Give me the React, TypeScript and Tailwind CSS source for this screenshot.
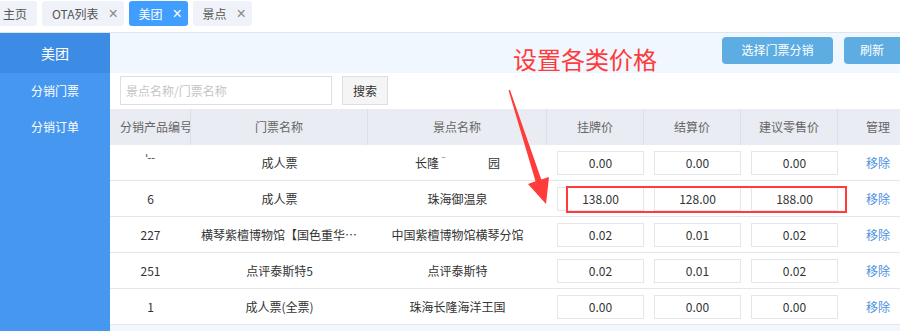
import React from "react";

type Row = {
  id: React.ReactNode;
  ticket: string;
  spot: React.ReactNode;
  prices: [string, string, string];
};

const rows: Row[] = [
  {
    id: <span className="text-[11px] leading-none -mt-[10px]">ˈ--</span>,
    ticket: "成人票",
    spot: (
      <span>
        长隆<span className="text-[9px] align-top">ˉ</span>
        <span className="inline-block w-[40px]" />园
      </span>
    ),
    prices: ["0.00", "0.00", "0.00"],
  },
  { id: "6", ticket: "成人票", spot: "珠海御温泉", prices: ["138.00", "128.00", "188.00"] },
  { id: "227", ticket: "横琴紫檀博物馆【国色重华展】门票", spot: "中国紫檀博物馆横琴分馆", prices: ["0.02", "0.01", "0.02"] },
  { id: "251", ticket: "点评泰斯特5", spot: "点评泰斯特", prices: ["0.02", "0.01", "0.02"] },
  { id: "1", ticket: "成人票(全票)", spot: "珠海长隆海洋王国", prices: ["0.00", "0.00", "0.00"] },
];

const cols = "grid grid-cols-[81px_177px_179px_97px_97px_97px_80px]";

function Tab({ label, active, close = true, first }: { label: string; active?: boolean; close?: boolean; first?: boolean }) {
  return (
    <div
      className={`h-[25px] mt-[1px] rounded-[3px] flex items-center gap-[10px] text-[12px] ${
        first ? "-ml-[10px] pl-[13px] pr-[10px]" : "pl-[10px] pr-[6px]"
      } ${active ? "bg-[#409eff] text-white" : "bg-[#eff2f8] text-[#555]"}`}
    >
      <span>{label}</span>
      {close && (
        <span
          className={`w-[9px] text-center text-[16px] leading-none ${active ? "text-white" : "text-[#888]"}`}
          style={{ fontFamily: '"Liberation Sans", sans-serif' }}
        >
          ×
        </span>
      )}
    </div>
  );
}

function PriceInput({ value }: { value: string }) {
  return (
    <div className="overflow-hidden flex items-center pl-[10px]">
      <div className="w-[100px] h-[24px] border border-[#e4e6ea] flex items-center justify-center text-[12px] text-[#333] bg-white">
        {value}
      </div>
    </div>
  );
}

export default function App() {
  return (
    <div
      className="relative w-[900px] h-[331px] overflow-hidden bg-white"
      style={{ fontFamily: '"Noto Sans CJK SC", "Noto Sans", sans-serif' }}
    >
      {/* tabs */}
      <div className="h-[33px] flex gap-[5px] border-b border-[#dfe5ee]">
        <Tab label="主页" close={false} first />
        <Tab label="OTA列表" />
        <Tab label="美团" active />
        <Tab label="景点" />
      </div>

      <div className="flex h-[298px]">
        {/* sidebar */}
        <div className="w-[110px] shrink-0 bg-[#4697ef] text-white text-[12px]">
          <div className="h-[40px] bg-[#3c8be5] flex items-center justify-center text-[14px]">美团</div>
          <div className="h-[36px] flex items-center justify-center">分销门票</div>
          <div className="h-[36px] flex items-center justify-center">分销订单</div>
        </div>

        {/* main */}
        <div className="flex-1 flex flex-col min-w-0">
          <div className="h-[40px] shrink-0 bg-[#f0f7fe] flex items-center justify-end gap-[11px]">
            <button className="h-[27px] w-[111px] rounded-[4px] bg-[#5dade2] text-white text-[12px] mt-[-6px]">
              选择门票分销
            </button>
            <button className="h-[27px] w-[56px] rounded-l-[4px] bg-[#5dade2] text-white text-[12px] mt-[-6px]">
              刷新
            </button>
          </div>

          <div className="flex gap-[10px] px-[10px] pt-[3px] pb-[4px]">
            <div className="w-[212px] h-[29px] border border-[#dcdfe6] flex items-center px-[5px] text-[12px] text-[#c4c4c4]">
              景点名称/门票名称
            </div>
            <button className="w-[46px] h-[29px] border border-[#dcdfe6] bg-[#f5f5f5] text-[12px] text-[#333]">
              搜索
            </button>
          </div>

          <div className="min-w-0">
            <div className={`${cols} h-[36px] bg-[#e9ecf2] text-[12px] text-[#666]`}>
              {["分销产品编号", "门票名称", "景点名称", "挂牌价", "结算价", "建议零售价", "管理"].map((h, i) => (
                <div
                  key={h}
                  className={`flex items-center whitespace-nowrap overflow-hidden ${
                    i === 0 ? "pl-[10px]" : "justify-center"
                  } ${i < 6 ? "border-r border-[#dcdfe6]" : "justify-start pl-[28px]"}`}
                >
                  {h}
                </div>
              ))}
            </div>
            {rows.map((r, idx) => (
              <div key={idx} className={`${cols} h-[36px] border-b border-[#e4e6ea] text-[12px] text-[#333]`}>
                <div className="flex items-center justify-center">{r.id}</div>
                <div className="flex items-center justify-center px-[10px] min-w-0">
                  <span className="truncate">{r.ticket}</span>
                </div>
                <div className="flex items-center justify-center whitespace-nowrap">{r.spot}</div>
                {r.prices.map((p, i) => (
                  <PriceInput key={i} value={p} />
                ))}
                <div className="flex items-center pl-[28px] text-[#4a90e2]">移除</div>
              </div>
            ))}
          </div>
          <div className="flex-1 bg-[#f0f7fe]" />
        </div>
      </div>

      {/* annotations */}
      <div className="absolute left-[513px] top-[42px] text-[24px] leading-[34px] text-[#ff3b3b]">
        设置各类价格
      </div>
      <div className="absolute left-[566px] top-[186px] w-[281px] h-[27px] border-2 border-[#ff3b3b]" />
      <svg className="absolute left-0 top-0 pointer-events-none" width="900" height="331" viewBox="0 0 900 331">
        <polygon
          points="510,90 541.3,179.4 549,177 546,204 528,184 535.5,181.2 508.5,90.3"
          fill="#ff3b3b"
        />
      </svg>
    </div>
  );
}
